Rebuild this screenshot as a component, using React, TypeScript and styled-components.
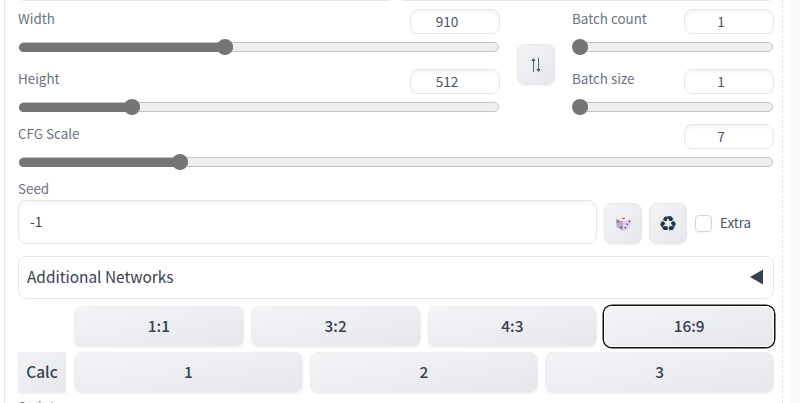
import React from "react";
import styled, { createGlobalStyle, css } from "styled-components";

const GlobalStyle = createGlobalStyle`
  * { box-sizing: border-box; }
  html, body { margin: 0; overflow: hidden; background: #fff; }
  body { font-family: "Noto Sans CJK SC", "Noto Sans", sans-serif; color: #374151; }
`;

const Page = styled.div`
  display: flex;
  width: 800px;
  height: 403px;
  overflow: hidden;
  padding-left: 4px;
  background: #fff;
`;

const Panel = styled.main`
  flex: 0 0 779px;
  height: 403px;
  overflow: hidden;
  padding: 0 8px 0 13px;
  border-left: 1px solid #e5e7eb;
  border-right: 1px dashed #dfe1e5;
`;

const Gutter = styled.aside`
  flex: 1;
  margin-left: 8px;
  background: #f9fafb;
`;

const PreviousRow = styled.div`
  display: flex;
  gap: 12px;
  height: 1px;
  padding: 0 4px;
`;

const PreviousEdge = styled.div<{ $width: number }>`
  width: ${(p) => p.$width}px;
  background: #e5e7eb;
`;

const SizeSection = styled.section`
  display: flex;
  height: 115px;
`;

const Stack = styled.div<{ $width: number }>`
  width: ${(p) => p.$width}px;
`;

const SwapColumn = styled.div`
  width: 72px;
  padding: 43px 0 0 17px;
`;

const Field = styled.div`
  height: 60px;
  padding-top: 8px;
`;

const FieldHead = styled.div`
  display: flex;
  justify-content: space-between;
  height: 25px;
`;

const Label = styled.label`
  font-size: 13.4px;
  line-height: 18px;
  color: #6b7280;
`;

const NumberBox = styled.div`
  width: 90px;
  height: 25px;
  padding-right: 16px;
  border: 1px solid #e5e7eb;
  border-radius: 8px;
  box-shadow: inset 0 2px 4px rgba(0, 0, 0, 0.05);
  font-size: 13.6px;
  line-height: 23px;
  text-align: center;
  color: #4b5563;
`;

const Track = styled.div`
  display: flex;
  align-items: center;
  height: 10px;
  margin: 8px 1px 0 1px;
  border: 1px solid #c2c2c2;
  border-radius: 5px;
  background: #efefef;
`;

const Fill = styled.div<{ $width: number }>`
  display: flex;
  flex: none;
  align-items: center;
  justify-content: flex-end;
  width: ${(p) => p.$width}px;
  height: 9px;
  margin-left: -1px;
  border-radius: 5px;
  background: #757575;
`;

const Thumb = styled.div`
  flex: none;
  width: 16px;
  height: 16px;
  border-radius: 50%;
  background: #757575;
`;

const raised = css`
  border: 1px solid #e5e7eb;
  border-radius: 8px;
  background: linear-gradient(to bottom right, #f3f4f6, #e5e7eb);
  box-shadow: 0 1px 2px rgba(0, 0, 0, 0.05);
`;

const ToolButton = styled.button`
  ${raised}
  display: flex;
  align-items: center;
  justify-content: center;
  flex: none;
  width: 38px;
  height: 41px;
  padding: 0;
  color: #253246;
`;

const SeedLabel = styled(Label)`
  display: block;
  height: 21px;
  margin-top: 3px;
`;

const SeedRow = styled.div`
  display: flex;
  align-items: flex-end;
  gap: 7px;
  height: 44px;
`;

const SeedInput = styled.div`
  width: 579px;
  height: 44px;
  padding-left: 11px;
  border: 1px solid #e5e7eb;
  border-radius: 8px;
  box-shadow: inset 0 2px 4px rgba(0, 0, 0, 0.05);
  font-size: 13.6px;
  line-height: 40px;
`;

const Extra = styled.label`
  display: flex;
  align-items: center;
  gap: 8px;
  height: 41px;
  font-size: 13.4px;
  line-height: 20px;
  color: #4b5563;
`;

const ExtraText = styled.span`
  padding-bottom: 3px;
`;

const Checkbox = styled.span`
  width: 17px;
  height: 17px;
  margin-left: 1px;
  border: 1px solid #d1d5db;
  border-radius: 4px;
  box-shadow: 0 1px 2px rgba(0, 0, 0, 0.05);
`;

const Accordion = styled.div`
  display: flex;
  justify-content: space-between;
  height: 43px;
  margin-top: 12px;
  padding: 0 10px 0 8px;
  border: 1px solid #e5e7eb;
  border-radius: 8px;
  font-size: 15.4px;
  line-height: 39px;
`;

const Arrow = styled.svg`
  margin-top: 12px;
`;

const ButtonRow = styled.div<{ $top: number; $left?: number }>`
  display: flex;
  gap: 7px;
  height: 41px;
  margin-top: ${(p) => p.$top}px;
  padding-left: ${(p) => p.$left ?? 0}px;
`;

const Choice = styled.button<{ $focused?: boolean }>`
  ${raised}
  flex: 1;
  border-color: #eceef1;
  padding: 0 0 3px;
  font: 500 15.4px/36px "Noto Sans CJK SC", "Noto Sans", sans-serif;
  color: #374151;
  ${(p) =>
    p.$focused &&
    css`
      border-color: #fff;
      box-shadow: 0 0 0 1.5px #101010;
    `}
`;

const CalcButton = styled(Choice)`
  flex: 0 0 48px;
  margin-right: 1px;
  border-radius: 0;
`;

const NextLabel = styled(Label)`
  display: block;
  margin-top: 4px;
`;

function Slider({ label, value, fill }: { label: string; value: string; fill: number }) {
  return (
    <Field>
      <FieldHead>
        <Label>{label}</Label>
        <NumberBox>{value}</NumberBox>
      </FieldHead>
      <Track>
        <Fill $width={fill}>
          <Thumb />
        </Fill>
      </Track>
    </Field>
  );
}

function SwapIcon() {
  return (
    <svg width="12" height="16" viewBox="0 0 12 16" fill="none" stroke="#4b5563" strokeWidth="0.9">
      <path d="M3.5 15V2M8.5 1v13" />
      <path d="M1.3 4 3.5 1l2.2 3zM6.3 12l2.2 3 2.2-3z" fill="#4b5563" stroke="none" />
    </svg>
  );
}

function DiceIcon() {
  return (
    <svg width="17" height="17" viewBox="0 0 18 18">
      <path d="M1 4 9 1.5 17 4 9 7z" fill="#f4eef6" />
      <path d="M1 4 9 7v10L1.7 13z" fill="#b9acc0" />
      <path d="M17 4 9 7v10l7.2-4z" fill="#ded3e8" />
      <ellipse cx="9" cy="3.6" rx="1.9" ry="0.8" fill="#ee4450" />
      <g fill="#50346f">
        <ellipse cx="3" cy="7" rx="0.8" ry="1" />
        <ellipse cx="6.6" cy="13.2" rx="0.8" ry="1" />
        <ellipse cx="15.3" cy="6.8" rx="0.8" ry="1" />
        <ellipse cx="13" cy="9.9" rx="0.8" ry="1" />
        <ellipse cx="10.8" cy="13.4" rx="0.8" ry="1" />
      </g>
    </svg>
  );
}

const RecycleGlyph = styled.span`
  font: 21px/22px "DejaVu Sans", sans-serif;
`;

export default function App() {
  return (
    <>
      <GlobalStyle />
      <Page>
        <Panel>
          <PreviousRow>
            <PreviousEdge $width={368} />
            <PreviousEdge $width={368} />
          </PreviousRow>
          <SizeSection>
            <Stack $width={482}>
              <Slider label="Width" value="910" fill={214} />
              <Slider label="Height" value="512" fill={121} />
            </Stack>
            <SwapColumn>
              <ToolButton aria-label="Swap dimensions">
                <SwapIcon />
              </ToolButton>
            </SwapColumn>
            <Stack $width={202}>
              <Slider label="Batch count" value="1" fill={15} />
              <Slider label="Batch size" value="1" fill={15} />
            </Stack>
          </SizeSection>
          <Slider label="CFG Scale" value="7" fill={169} />
          <SeedLabel as="div">Seed</SeedLabel>
          <SeedRow>
            <SeedInput>-1</SeedInput>
            <ToolButton aria-label="Random seed">
              <DiceIcon />
            </ToolButton>
            <ToolButton aria-label="Reuse seed">
              <RecycleGlyph>♻</RecycleGlyph>
            </ToolButton>
            <Extra>
              <Checkbox />
              <ExtraText>Extra</ExtraText>
            </Extra>
          </SeedRow>
          <Accordion>
            <span>Additional Networks</span>
            <Arrow width="13" height="16" viewBox="0 0 13 16">
              <path d="M0 8 13 0.5v15z" fill="#374151" />
            </Arrow>
          </Accordion>
          <ButtonRow $top={7} $left={56}>
            <Choice>1:1</Choice>
            <Choice>3:2</Choice>
            <Choice>4:3</Choice>
            <Choice $focused>16:9</Choice>
          </ButtonRow>
          <ButtonRow $top={5}>
            <CalcButton>Calc</CalcButton>
            <Choice>1</Choice>
            <Choice>2</Choice>
            <Choice>3</Choice>
          </ButtonRow>
          <NextLabel>Script</NextLabel>
        </Panel>
        <Gutter />
      </Page>
    </>
  );
}
